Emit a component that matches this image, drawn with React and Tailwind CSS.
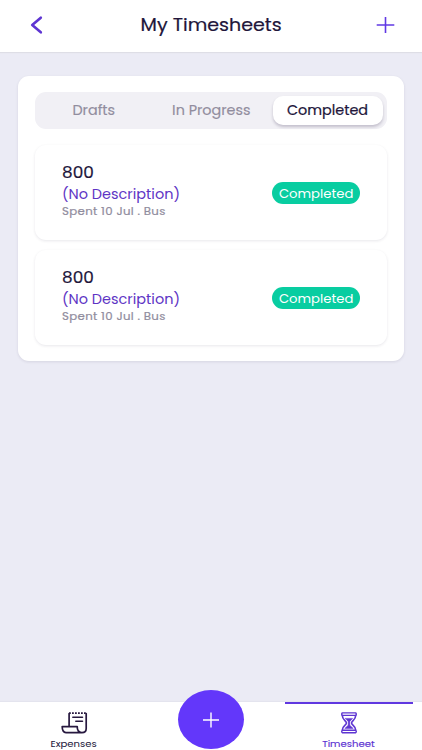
import React from "react";

const tabs = [
  { label: "Drafts", width: "w-[110px]" },
  { label: "In Progress", width: "w-[124px]" },
];

const entries = [
  { id: 1, amount: "800", description: "(No Description)", meta: "Spent 10 Jul . Bus", status: "Completed" },
  { id: 2, amount: "800", description: "(No Description)", meta: "Spent 10 Jul . Bus", status: "Completed" },
];

function Header() {
  return (
    <header className="flex h-[52px] shrink-0 items-center justify-between bg-white pr-[27px] pl-[29px] shadow-[0_1px_1px_#dedee6]">
      <button aria-label="Back" className="mt-[-2px]">
        <svg width="16" height="20" viewBox="0 0 16 20" fill="none" stroke="#5e35d2" strokeWidth="2.6" strokeLinecap="round" strokeLinejoin="round">
          <path d="M11.8 2.7 3.2 10 11.8 17.3" />
        </svg>
      </button>
      <h1 className="ml-[3px] scale-x-[1.1] text-[17.3px] font-normal whitespace-nowrap [-webkit-text-stroke:0.2px_#21153a]">My Timesheets</h1>
      <button aria-label="Add timesheet" className="mt-[-2px]">
        <svg width="20" height="20" viewBox="0 0 20 20" fill="none" stroke="#6038e4" strokeWidth="1.6">
          <path d="M1.7 10H19.3M10.5 2V18" />
        </svg>
      </button>
    </header>
  );
}

function Entry({ entry }) {
  return (
    <article className="flex h-[95px] items-center justify-between rounded-[11px] bg-white pr-[26.5px] pl-[26.5px] shadow-[0_1px_3px_rgba(30,20,60,0.1)]">
      <div className="mt-[-4px] flex flex-col items-start whitespace-nowrap">
        <div className="h-[22px] origin-left scale-x-[1.08] text-[15.6px] leading-[22px] [-webkit-text-stroke:0.2px_#21153a]">{entry.amount}</div>
        <div className="h-5 origin-left scale-x-[1.08] text-[13.4px] leading-[22px] text-[#5e35c5]">{entry.description}</div>
        <div className="h-4 origin-left scale-x-[1.12] text-[10.5px] leading-4 tracking-[0.3px] text-[#918d9e] [-webkit-text-stroke:0.2px_#918d9e]">{entry.meta}</div>
      </div>
      <div className="mt-px flex h-[22px] w-[88px] items-center justify-center rounded-full bg-[#08cda1] text-white">
        <span className="scale-x-[1.09] pt-px text-[12.1px] leading-5">{entry.status}</span>
      </div>
    </article>
  );
}

function BottomBar() {
  return (
    <nav className="relative flex h-12 shrink-0 bg-white shadow-[0_-1px_1px_#e4e4ee]">
      <div className="flex w-[147px] flex-col items-center pt-[9px]">
        <svg className="ml-px shrink-0" width="27" height="24" viewBox="0 0 27 24" fill="none" stroke="#27183f" strokeWidth="1.7" strokeLinejoin="round" strokeLinecap="round">
          <path d="M8.1 15V2.5M25.2 2.5V17.5Q25.2 21.6 21 21.6H5Q1.2 21.6 1.2 15.6H16.2Q16.2 21.6 20.7 21.6" />
          <path d="M8 2.1H25.4" strokeDasharray="1.8 1.2" strokeLinecap="butt" strokeWidth="1.8" />
          <path d="M11.8 6.3H21.5M14.8 10.2H21.5" strokeWidth="1.5" />
        </svg>
        <span className="mt-px scale-x-[1.12] text-[9px] leading-[17px]">Expenses</span>
      </div>
      <button
        aria-label="Add"
        className="absolute top-[-12px] left-[178px] flex h-[59px] w-[66px] items-center justify-center rounded-[50%] bg-[#6337fa]"
      >
        <svg width="18" height="16" viewBox="0 0 18 16" stroke="white" strokeWidth="1.4">
          <path d="M1 8H17M9 .5V15.5" />
        </svg>
      </button>
      <div className="ml-[137.5px] flex w-[128.5px] flex-col items-center border-t-2 border-[#6038e0] pt-[7px] text-[#5e35d2]">
        <svg className="shrink-0" width="20" height="24" viewBox="0 0 20 24" fill="none" stroke="currentColor" strokeWidth="1.6" strokeLinecap="round" strokeLinejoin="round">
          <path d="M3.4 1.9H16.6Q18 3.1 16.6 4.4H3.4Q2 3.1 3.4 1.9ZM3.4 19.2H16.6Q18 20.5 16.6 21.7H3.4Q2 20.5 3.4 19.2Z" strokeWidth="1.4" />
          <path d="M3.3 4.6C3.3 9 7.4 9.8 7.4 12S3.3 15 3.3 19M16.7 4.6C16.7 9 12.6 9.8 12.6 12S16.7 15 16.7 19" />
          <path d="M6.4 7.4H13.6L10.8 10.4V14.2L14.2 17.4H5.8L9.2 14.2V10.4Z" fill="currentColor" strokeWidth=".5" />
        </svg>
        <span className="mt-px scale-x-[1.12] text-[9px] leading-[17px] [-webkit-text-stroke:0.15px_#5e35d2]">Timesheet</span>
      </div>
    </nav>
  );
}

export default function App() {
  return (
    <div className="flex h-[750px] w-[422px] flex-col overflow-hidden bg-[#ebebf5] font-['Poppins','Inter',sans-serif] text-[#21153a]">
      <Header />
      <main className="flex-1 px-[18px] pt-6">
        <section className="h-[285px] rounded-[11px] bg-white pr-[17.5px] pl-[17px] pt-4 shadow-[0_1px_3px_rgba(30,20,60,0.1)]">
          <div className="flex h-[37px] items-center rounded-[11px] bg-[#f1f0f5] pr-1 pl-1">
            {tabs.map((tab) => (
              <button key={tab.label} className={`${tab.width} flex justify-center pt-px text-[13.3px] whitespace-nowrap text-[#918d9e] [-webkit-text-stroke:0.15px_#918d9e]`}>
                <span className="scale-x-[1.08]">{tab.label}</span>
              </button>
            ))}
            <button className="flex h-[29px] flex-1 items-center justify-center rounded-[10px] bg-white pt-px text-[13.3px] shadow-[0_2px_3px_rgba(30,20,60,0.22)] [-webkit-text-stroke:0.2px_#21153a]">
              <span className="scale-x-[1.08]">Completed</span>
            </button>
          </div>
          <div className="mt-4 flex flex-col gap-[10px]">
            {entries.map((entry) => (
              <Entry key={entry.id} entry={entry} />
            ))}
          </div>
        </section>
      </main>
      <BottomBar />
    </div>
  );
}
